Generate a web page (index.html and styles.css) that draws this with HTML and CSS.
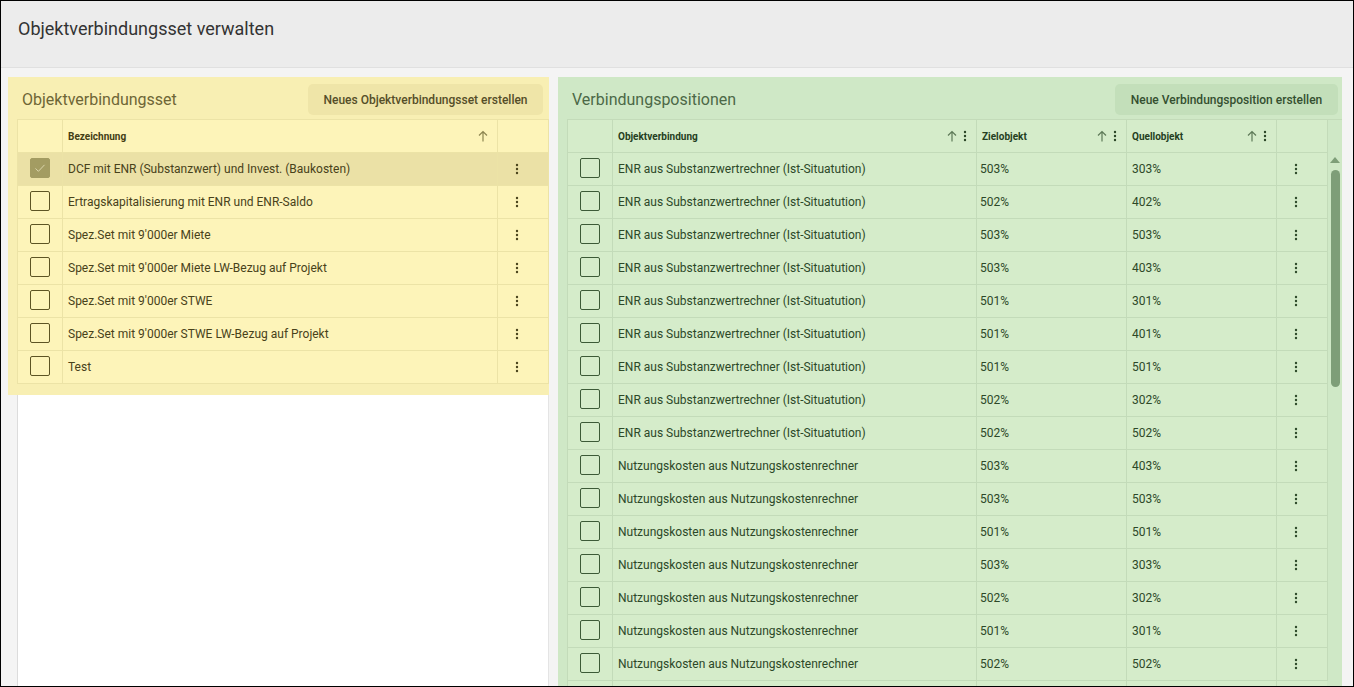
FILE: index.html
```html
<!DOCTYPE html>
<html lang="de">
<head>
<meta charset="utf-8">
<title>Objektverbindungsset verwalten</title>
<link rel="stylesheet" href="styles.css">
</head>
<body>
<div class="frame">
  <header class="topbar">
    <h1 class="page-title">Objektverbindungsset verwalten</h1>
  </header>
  <main class="content">
    <section class="col col-left">
      <div class="panel panel-yellow">
        <div class="panel-head">
          <h2 class="panel-title">Objektverbindungsset</h2>
          <button class="btn">Neues Objektverbindungsset erstellen</button>
        </div>
        <table class="grid grid-left">
          <colgroup><col class="c-check"><col class="c-name-l"><col class="c-act"></colgroup>
          <thead>
            <tr>
              <th></th>
              <th><div class="th-in"><span>Bezeichnung</span><span class="th-icons"><svg class="ico-up" viewBox="0 0 10 12"><path d="M5 11.5V1.5M1 5.5L5 1.5L9 5.5"/></svg></span></div></th>
              <th></th>
            </tr>
          </thead>
          <tbody>
            <tr class="sel"><td class="tc"><span class="cb checked"><svg viewBox="0 0 20 20"><path d="M5 10.5l3.2 3.2L15 6.5"/></svg></span></td><td>DCF mit ENR (Substanzwert) und Invest. (Baukosten)</td><td class="ta"><svg class="kebab" viewBox="0 0 4 12"><circle cx="2" cy="2" r="1.2"/><circle cx="2" cy="6" r="1.2"/><circle cx="2" cy="10" r="1.2"/></svg></td></tr>
            <tr><td class="tc"><span class="cb"></span></td><td>Ertragskapitalisierung mit ENR und ENR-Saldo</td><td class="ta"><svg class="kebab" viewBox="0 0 4 12"><circle cx="2" cy="2" r="1.2"/><circle cx="2" cy="6" r="1.2"/><circle cx="2" cy="10" r="1.2"/></svg></td></tr>
            <tr><td class="tc"><span class="cb"></span></td><td>Spez.Set mit 9'000er Miete</td><td class="ta"><svg class="kebab" viewBox="0 0 4 12"><circle cx="2" cy="2" r="1.2"/><circle cx="2" cy="6" r="1.2"/><circle cx="2" cy="10" r="1.2"/></svg></td></tr>
            <tr><td class="tc"><span class="cb"></span></td><td>Spez.Set mit 9'000er Miete LW-Bezug auf Projekt</td><td class="ta"><svg class="kebab" viewBox="0 0 4 12"><circle cx="2" cy="2" r="1.2"/><circle cx="2" cy="6" r="1.2"/><circle cx="2" cy="10" r="1.2"/></svg></td></tr>
            <tr><td class="tc"><span class="cb"></span></td><td>Spez.Set mit 9'000er STWE</td><td class="ta"><svg class="kebab" viewBox="0 0 4 12"><circle cx="2" cy="2" r="1.2"/><circle cx="2" cy="6" r="1.2"/><circle cx="2" cy="10" r="1.2"/></svg></td></tr>
            <tr><td class="tc"><span class="cb"></span></td><td>Spez.Set mit 9'000er STWE LW-Bezug auf Projekt</td><td class="ta"><svg class="kebab" viewBox="0 0 4 12"><circle cx="2" cy="2" r="1.2"/><circle cx="2" cy="6" r="1.2"/><circle cx="2" cy="10" r="1.2"/></svg></td></tr>
            <tr><td class="tc"><span class="cb"></span></td><td>Test</td><td class="ta"><svg class="kebab" viewBox="0 0 4 12"><circle cx="2" cy="2" r="1.2"/><circle cx="2" cy="6" r="1.2"/><circle cx="2" cy="10" r="1.2"/></svg></td></tr>
          </tbody>
        </table>
      </div>
      <div class="left-rest"></div>
    </section>

    <section class="col col-right">
      <div class="panel panel-green">
        <div class="panel-head">
          <h2 class="panel-title">Verbindungspositionen</h2>
          <button class="btn">Neue Verbindungsposition erstellen</button>
        </div>
        <div class="grid-wrap">
          <div class="grid-scroll">
            <table class="grid grid-right">
              <colgroup><col class="c-check"><col class="c-name-r"><col class="c-val"><col class="c-val"><col class="c-act"></colgroup>
              <thead>
                <tr>
                  <th></th>
                  <th><div class="th-in"><span>Objektverbindung</span><span class="th-icons"><svg class="ico-up" viewBox="0 0 10 12"><path d="M5 11.5V1.5M1 5.5L5 1.5L9 5.5"/></svg><svg class="kebab" viewBox="0 0 4 12"><circle cx="2" cy="2" r="1.2"/><circle cx="2" cy="6" r="1.2"/><circle cx="2" cy="10" r="1.2"/></svg></span></div></th>
                  <th><div class="th-in"><span>Zielobjekt</span><span class="th-icons"><svg class="ico-up" viewBox="0 0 10 12"><path d="M5 11.5V1.5M1 5.5L5 1.5L9 5.5"/></svg><svg class="kebab" viewBox="0 0 4 12"><circle cx="2" cy="2" r="1.2"/><circle cx="2" cy="6" r="1.2"/><circle cx="2" cy="10" r="1.2"/></svg></span></div></th>
                  <th><div class="th-in"><span>Quellobjekt</span><span class="th-icons"><svg class="ico-up" viewBox="0 0 10 12"><path d="M5 11.5V1.5M1 5.5L5 1.5L9 5.5"/></svg><svg class="kebab" viewBox="0 0 4 12"><circle cx="2" cy="2" r="1.2"/><circle cx="2" cy="6" r="1.2"/><circle cx="2" cy="10" r="1.2"/></svg></span></div></th>
                  <th></th>
                </tr>
              </thead>
              <tbody id="rbody"></tbody>
            </table>
            <div class="grid-more"></div>
          </div>
          <div class="scrollbar">
            <div class="sb-head"></div>
            <div class="sb-track">
              <span class="sb-arrow"></span>
              <span class="sb-thumb"></span>
            </div>
          </div>
        </div>
      </div>
    </section>
  </main>
</div>
<script src="app.js"></script>
</body>
</html>
```

FILE: app.js
```js
(function () {
  var enr = "ENR aus Substanzwertrechner (Ist-Situatution)";
  var nk = "Nutzungskosten aus Nutzungskostenrechner";
  var rows = [
    [enr, "503%", "303%"], [enr, "502%", "402%"], [enr, "503%", "503%"],
    [enr, "503%", "403%"], [enr, "501%", "301%"], [enr, "501%", "401%"],
    [enr, "501%", "501%"], [enr, "502%", "302%"], [enr, "502%", "502%"],
    [nk, "503%", "403%"], [nk, "503%", "503%"], [nk, "501%", "501%"],
    [nk, "503%", "303%"], [nk, "502%", "302%"], [nk, "501%", "301%"],
    [nk, "502%", "502%"]
  ];
  var kebab = '<svg class="kebab" viewBox="0 0 4 12"><circle cx="2" cy="2" r="1.2"/><circle cx="2" cy="6" r="1.2"/><circle cx="2" cy="10" r="1.2"/></svg>';
  var html = "";
  rows.forEach(function (r) {
    html += '<tr><td class="tc"><span class="cb"></span></td><td>' + r[0] +
      '</td><td class="tv">' + r[1] + '</td><td>' + r[2] +
      '</td><td class="ta">' + kebab + '</td></tr>';
  });
  document.getElementById("rbody").innerHTML = html;
})();
```

FILE: styles.css
```css
* { box-sizing: border-box; }
html, body { margin: 0; padding: 0; }
body {
  font-family: Roboto, "Noto Sans", "Liberation Sans", sans-serif;
  background: #fff;
}
.frame {
  width: 1354px;
  height: 687px;
  border: 1px solid #000;
  background: #f4f4f4;
  overflow: hidden;
  display: flex;
  flex-direction: column;
}
.topbar {
  height: 67px;
  flex: 0 0 67px;
  background: #ececec;
  border-bottom: 1px solid #e0e0e0;
  display: flex;
  align-items: center;
  padding-left: 17px;
}
.page-title {
  margin: 0;
  font-size: 18px;
  font-weight: 400;
  color: #333;
  position: relative;
  top: -6px;
}
.content {
  flex: 1;
  display: flex;
  gap: 9px;
  padding: 9px 10px 0 7px;
  min-height: 0;
}
.col { display: flex; flex-direction: column; min-height: 0; }
.col-left { width: 541px; }
.col-right { width: 784px; }

.panel { display: flex; flex-direction: column; }
.panel-yellow { background: #f8efb3; padding: 0 0 11px 9px; }
.panel-green { background: #cfe8c6; padding: 0 0 0 9px; flex: 1; min-height: 0; }

.panel-head {
  height: 42px;
  flex: 0 0 42px;
  display: flex;
  align-items: center;
  justify-content: space-between;
}
.panel-title {
  margin: 3px 0 0 5px;
  font-size: 16px;
  font-weight: 400;
}
.panel-yellow .panel-title { color: #6e6636; }
.panel-green .panel-title { color: #4c6947; }
.btn {
  font-family: inherit;
  font-size: 12px;
  font-weight: 500;
  height: 31px;
  border: 0;
  border-radius: 5px;
  padding: 0 15px;
  margin-top: 3px;
}
.panel-yellow .btn { background: #efe5a8; color: #554e28; width: 235px; margin-right: 6px; }
.panel-green .btn { background: #c3dfba; color: #344f30; width: 223px; margin-right: 4px; }

.grid {
  border-collapse: collapse;
  table-layout: fixed;
  font-size: 12px;
}
.grid-left { width: 532px; background: #fdf4b9; color: #48421a; }
.grid-right { width: 760px; background: #d5ecca; color: #2c4828; }
.c-check { width: 45px; }
.c-name-l { width: 435px; }
.c-name-r { width: 364px; }
.c-val { width: 150px; }
.c-act { width: 51px; }

.grid th, .grid td {
  height: 33px;
  padding: 0 5px;
  text-align: left;
  white-space: nowrap;
  overflow: hidden;
}
.grid-left th, .grid-left td { border: 1px solid #ece3a6; }
.grid-right th, .grid-right td { border: 1px solid #c3dbb9; }
.grid th { font-size: 10px; font-weight: 700; }
.grid-left th { color: #433d14; }
.grid-right th { color: #253f22; }
.grid td.tv { padding-left: 3px; }

.th-in { display: flex; align-items: center; justify-content: space-between; }
.th-icons { display: flex; align-items: center; gap: 6px; padding-right: 4px; }
.ico-up { width: 10px; height: 12px; fill: none; stroke-width: 1.2; }
.grid-left .ico-up { stroke: #8c8550; }
.grid-right .ico-up { stroke: #5e7a58; }
.kebab { width: 4px; height: 12px; display: block; }
.grid-left .kebab { fill: #4a441c; }
.grid-right .kebab { fill: #2f4a2b; }
.th-icons .kebab { fill: #2a4426; }

.grid td.tc { padding: 0; text-align: center; }
.grid td.ta { padding-left: 17px; }
.grid-left tr.sel td { background: #ebe1a6; }

.cb {
  display: inline-block;
  width: 20px;
  height: 20px;
  border-radius: 2px;
  vertical-align: middle;
  position: relative;
  top: -1px;
}
.grid-left .cb { border: 1px solid #5d5424; }
.grid-right .cb { border: 1px solid #3c5a37; }
.grid-left .cb.checked { background: #a39c62; border-color: #a39c62; }
.cb svg { width: 18px; height: 18px; display: block; fill: none; stroke: #dcd7ad; stroke-width: 1.1; }

.left-rest {
  flex: 1;
  margin-left: 9px;
  background: #fff;
  border-left: 1px solid #dcdcdc;
  border-right: 1px solid #e4e4e4;
}

.grid-wrap { display: flex; flex: 1; min-height: 0; overflow: hidden; }
.grid-scroll { width: 760px; display: flex; flex-direction: column; }
.grid-more {
  flex: 1;
  width: 760px;
  background: linear-gradient(to right,
    transparent 0, transparent 44px, #c3dbb9 44px, #c3dbb9 45px,
    transparent 45px, transparent 408px, #c3dbb9 408px, #c3dbb9 409px,
    transparent 409px, transparent 558px, #c3dbb9 558px, #c3dbb9 559px,
    transparent 559px, transparent 708px, #c3dbb9 708px, #c3dbb9 709px,
    transparent 709px), #d5ecca;
  border-left: 1px solid #c3dbb9;
}
.scrollbar { width: 15px; display: flex; flex-direction: column; }
.sb-head { height: 33px; border-top: 1px solid #c3dbb9; border-left: 1px solid #c3dbb9; }
.sb-track { flex: 1; position: relative; }
.sb-arrow {
  position: absolute;
  left: 3px;
  top: 5px;
  width: 0; height: 0;
  border-left: 5px solid transparent;
  border-right: 5px solid transparent;
  border-bottom: 6px solid #7e9e78;
}
.sb-thumb {
  position: absolute;
  left: 4px;
  top: 18px;
  width: 9px;
  height: 217px;
  border-radius: 5px;
  background: #7e9e78;
}
```
